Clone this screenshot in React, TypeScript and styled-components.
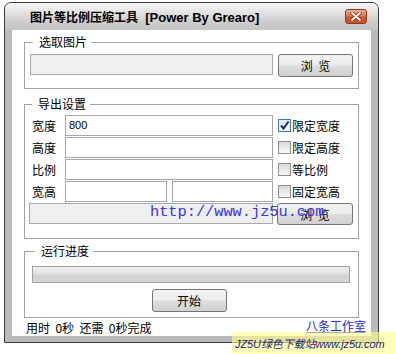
import styled, { createGlobalStyle } from "styled-components";

const GlobalStyle = createGlobalStyle`
  html, body {
    margin: 0;
    padding: 0;
    background: #fff;
  }
  body {
    font-family: "Liberation Sans", "Noto Sans CJK SC", sans-serif;
    font-size: 12px;
    color: #000;
  }
`;

const Page = styled.div`
  position: relative;
  width: 396px;
  height: 354px;
  box-sizing: border-box;
  padding: 2px 0 0 4px;
  overflow: hidden;
`;

const Window = styled.div`
  width: 375px;
  height: 341px;
  box-sizing: border-box;
  border: 1px solid #3c3c3c;
  border-radius: 7px 7px 0 0;
  background: #bababa;
  display: flex;
  flex-direction: column;
  overflow: hidden;
`;

const TitleBar = styled.div`
  flex: none;
  height: 27px;
  display: flex;
  align-items: center;
  justify-content: space-between;
  padding: 0 11px 0 25px;
  background: linear-gradient(#f7f7f7, #e2e2e2 35%, #cdcdcd 70%, #c4c4c4);
`;

const TitleText = styled.div`
  font-weight: bold;
  font-size: 13px;
  white-space: pre;
  span {
    font-family: "Noto Sans CJK SC", sans-serif;
    font-size: 12px;
  }
`;

const CloseButton = styled.div`
  width: 22px;
  height: 15px;
  box-sizing: border-box;
  border: 1px solid #8c3b22;
  border-radius: 3px;
  background: linear-gradient(#efb096, #df7a55 45%, #cc5630 55%, #c65530);
  display: flex;
  align-items: center;
  justify-content: center;
`;

const Frame = styled.div`
  flex: 1;
  display: flex;
  padding: 0 7px 6px;
`;

const Client = styled.div`
  flex: 1;
  background: #fff;
  padding: 4px 12px 0;
  display: flex;
  flex-direction: column;
`;

const GroupBox = styled.fieldset<{ $gap: number; $pad: string }>`
  margin: ${({ $gap }) => $gap}px 0 0;
  padding: ${({ $pad }) => $pad};
  border: 1px solid #9ea2aa;
  min-inline-size: 0;
`;

const GroupTitle = styled.legend`
  margin-left: 3px;
  padding: 0 4px 0 6px;
  line-height: 16px;
  font-family: "Noto Sans CJK SC", sans-serif;
  font-size: 12px;
`;

const PathRow = styled.div`
  display: flex;
  align-items: flex-start;
  gap: 5px;
`;

const TextField = styled.div<{ $w: number; $disabled?: boolean }>`
  width: ${({ $w }) => $w}px;
  height: 21px;
  box-sizing: border-box;
  border: 1px solid #a3a7ae;
  background: ${({ $disabled }) => ($disabled ? "#efefef" : "#fff")};
  padding-left: 3px;
  font-size: 11px;
  line-height: 19px;
`;

const PushButton = styled.div<{ $w: number; $h: number }>`
  width: ${({ $w }) => $w}px;
  height: ${({ $h }) => $h}px;
  box-sizing: border-box;
  border: 1px solid #767676;
  border-radius: 3px;
  background: linear-gradient(#f3f3f3, #ebebeb 48%, #dddddd 52%, #d0d0d0);
  display: flex;
  align-items: center;
  justify-content: center;
  font-family: "Noto Sans CJK SC", sans-serif;
  font-size: 12px;
  white-space: pre;
`;

const SettingRow = styled.div`
  display: flex;
  align-items: center;
  height: 21px;
  margin-bottom: 1px;
`;

const FieldLabel = styled.div`
  width: 36px;
  box-sizing: border-box;
  padding-left: 3px;
  font-family: "Noto Sans CJK SC", sans-serif;
`;

const FieldPair = styled.div`
  display: flex;
  gap: 5px;
`;

const CheckItem = styled.div`
  display: flex;
  align-items: center;
  gap: 1px;
  margin-left: 5px;
  font-family: "Noto Sans CJK SC", sans-serif;
`;

const CheckMark = styled.div<{ $on?: boolean }>`
  width: 13px;
  height: 13px;
  box-sizing: border-box;
  border: 1px solid ${({ $on }) => ($on ? "#3c7bb0" : "#8e8f8f")};
  background: ${({ $on }) =>
    $on ? "linear-gradient(#dce9f4, #fdfdfd)" : "linear-gradient(#d9d9d9, #f8f8f8)"};
  display: flex;
  align-items: center;
  justify-content: center;
`;

const OutputRow = styled.div`
  display: flex;
  align-items: flex-start;
  gap: 4px;
  margin-top: 1px;
`;

const ProgressBar = styled.div`
  height: 17px;
  box-sizing: border-box;
  border: 1px solid #a2a2a2;
  background: linear-gradient(#ededed, #e2e2e2 45%, #d0d0d0 55%, #d8d8d8);
`;

const Centered = styled.div`
  display: flex;
  justify-content: center;
  margin-top: 6px;
  padding-right: 4px;
`;

const Footer = styled.div`
  height: 17px;
  display: flex;
  align-items: flex-end;
  justify-content: space-between;
  padding: 0 5px 0 2px;
  margin: 0 -12px 0 0;
  font-family: "Noto Sans CJK SC", sans-serif;
  line-height: 15px;
  white-space: pre;
`;

const StudioLink = styled.a`
  color: #2a2ad8;
  text-decoration: underline;
  margin-bottom: 2px;
`;

const UrlWatermark = styled.div`
  position: absolute;
  left: 150px;
  top: 204px;
  font-family: "Liberation Mono", monospace;
  font-size: 15.3px;
  line-height: 16px;
  color: #3434f4;
`;

const WatermarkBand = styled.div`
  position: absolute;
  right: 0;
  bottom: 0;
  width: 164px;
  height: 22px;
  background: rgba(255, 255, 140, 0.6);
  display: flex;
  align-items: center;
  padding-left: 3px;
  box-sizing: border-box;
  font-family: "Liberation Sans", "Noto Sans CJK SC", sans-serif;
  font-style: italic;
  font-size: 11px;
  letter-spacing: -0.1px;
  color: #1c1c78;
  white-space: nowrap;
`;

const Check = ({ on, label }: { on?: boolean; label: string }) => (
  <CheckItem>
    <CheckMark $on={on}>
      {on && (
        <svg width="11" height="11" viewBox="0 0 11 11">
          <polyline points="2,5.5 4.5,8.5 9.5,1.5" fill="none" stroke="#1b2a6e" strokeWidth="2" />
        </svg>
      )}
    </CheckMark>
    {label}
  </CheckItem>
);

const App = () => {
  return (
    <Page>
      <GlobalStyle />
      <Window>
        <TitleBar>
          <TitleText>
            <span>图片等比例压缩工具</span>  [Power By Grearo]
          </TitleText>
          <CloseButton>
            <svg width="12" height="9" viewBox="0 0 12 9">
              <path d="M2 1 L10 8 M10 1 L2 8" stroke="#7a2a14" strokeWidth="3.4" strokeLinecap="round" />
              <path d="M2 1 L10 8 M10 1 L2 8" stroke="#fff" strokeWidth="1.8" strokeLinecap="round" />
            </svg>
          </CloseButton>
        </TitleBar>
        <Frame>
          <Client>
            <GroupBox $gap={0} $pad="4px 5px 11px">
              <GroupTitle>选取图片</GroupTitle>
              <PathRow>
                <TextField $w={243} $disabled />
                <PushButton $w={75} $h={23}>浏  览</PushButton>
              </PathRow>
            </GroupBox>

            <GroupBox $gap={7} $pad="3px 5px 13px 4px">
              <GroupTitle>导出设置</GroupTitle>
              <SettingRow>
                <FieldLabel>宽度</FieldLabel>
                <TextField $w={208}>800</TextField>
                <Check on label="限定宽度" />
              </SettingRow>
              <SettingRow>
                <FieldLabel>高度</FieldLabel>
                <TextField $w={208} />
                <Check label="限定高度" />
              </SettingRow>
              <SettingRow>
                <FieldLabel>比例</FieldLabel>
                <TextField $w={208} />
                <Check label="等比例" />
              </SettingRow>
              <SettingRow>
                <FieldLabel>宽高</FieldLabel>
                <FieldPair>
                  <TextField $w={102} />
                  <TextField $w={101} />
                </FieldPair>
                <Check label="固定宽高" />
              </SettingRow>
              <OutputRow>
                <TextField $w={244} $disabled />
                <PushButton $w={76} $h={22}>浏  览</PushButton>
              </OutputRow>
            </GroupBox>

            <GroupBox $gap={4} $pad="7px 8px 5px 7px">
              <GroupTitle>运行进度</GroupTitle>
              <ProgressBar />
              <Centered>
                <PushButton $w={75} $h={23}>开始</PushButton>
              </Centered>
            </GroupBox>

            <Footer>
              <span>用时  0秒  还需  0秒完成</span>
              <StudioLink>八条工作室</StudioLink>
            </Footer>
          </Client>
        </Frame>
      </Window>
      <UrlWatermark>http://www.jz5u.com</UrlWatermark>
      <WatermarkBand>JZ5U绿色下载站www.jz5u.com</WatermarkBand>
    </Page>
  );
};

export default App;
